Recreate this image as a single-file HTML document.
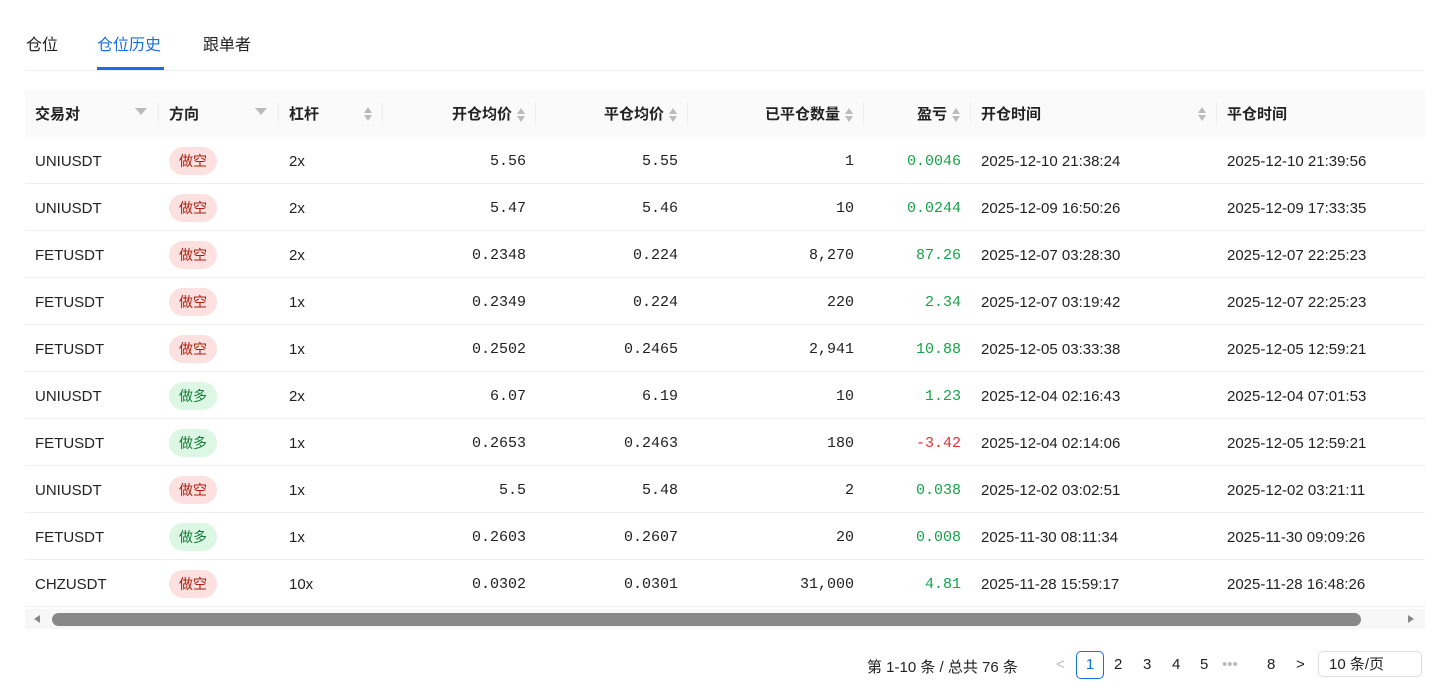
<!DOCTYPE html><html><head><meta charset="utf-8"><style>
body{margin:0;background:#fff;font-family:"Liberation Sans","Noto Sans CJK SC",sans-serif;color:#222;width:1443px;height:687px;overflow:hidden;position:relative}
.tabs{position:absolute;left:25px;top:0;width:1399px;height:70px;border-bottom:1px solid #eee}
.tab{position:absolute;top:31px;font-size:16px}
.tab.a{color:#1a6fe0}
.ink{position:absolute;left:97px;top:67px;width:67px;height:3px;background:#1a6fe0}
.wrap{position:absolute;left:25px;top:90px;width:1400px;height:520px;overflow:hidden}
table{border-collapse:collapse;table-layout:fixed;width:1420px;font-size:15px}
th{background:#fafafa;height:47px;font-weight:bold;text-align:left;padding:0 10px;position:relative;font-size:15px}
th.r,td.r{text-align:right}
th .sep{position:absolute;right:0;top:12px;height:23px;width:1px;background:#eee}
td{height:44px;border-bottom:1px solid #eee;padding:2px 10px 0;white-space:nowrap}
.m{font-family:"Liberation Mono",monospace;font-size:15px}
.g{color:#17a34a}.rd{color:#d33}
.tag{display:inline-block;width:48px;height:28px;line-height:28px;text-align:center;border-radius:14px;font-size:14px;vertical-align:middle}
.s{background:#fde0e0;color:#a21}.l{background:#dcf7e4;color:#177a3a}
.sort{display:inline-block;vertical-align:middle;margin-left:5px;width:9px;height:16px;position:relative}
.sort:before{content:"";position:absolute;top:1px;left:0;border:4.5px solid transparent;border-bottom:6px solid #bbb;border-top:0}
.sort:after{content:"";position:absolute;bottom:1px;left:0;border:4.5px solid transparent;border-top:6px solid #bbb;border-bottom:0}
.fr{position:absolute;right:10px;top:16px}
.fil{position:absolute;right:12px;top:18px;width:0;height:0;border-left:6px solid transparent;border-right:6px solid transparent;border-top:7px solid #bbb}
.sb{position:absolute;left:25px;top:609px;width:1400px;height:20px;background:#f7f7f7}
.thumb{position:absolute;left:52px;top:613px;width:1309px;height:13px;border-radius:7px;background:#888}
.pg{position:absolute;top:656px;font-size:15px}
</style></head><body>
<div class="tabs"></div>
<div class="tab" style="left:26px">仓位</div>
<div class="tab a" style="left:97px">仓位历史</div>
<div class="tab" style="left:203px">跟单者</div>
<div class="ink"></div>
<div class="wrap"><table>
<colgroup><col style="width:134px"><col style="width:120px"><col style="width:104px"><col style="width:153px"><col style="width:152px"><col style="width:176px"><col style="width:107px"><col style="width:246px"><col style="width:228px"></colgroup>
<tr><th>交易对<span class="fil"></span><span class="sep"></span></th><th>方向<span class="fil"></span><span class="sep"></span></th><th>杠杆<span class="sort fr"></span><span class="sep"></span></th><th class="r">开仓均价<span class="sort"></span><span class="sep"></span></th><th class="r">平仓均价<span class="sort"></span><span class="sep"></span></th><th class="r">已平仓数量<span class="sort"></span><span class="sep"></span></th><th class="r">盈亏<span class="sort"></span><span class="sep"></span></th><th>开仓时间<span class="sort fr"></span><span class="sep"></span></th><th>平仓时间</th></tr>
<tr><td>UNIUSDT</td><td><span class="tag s">做空</span></td><td>2x</td><td class="r m">5.56</td><td class="r m">5.55</td><td class="r m">1</td><td class="r m g">0.0046</td><td>2025-12-10 21:38:24</td><td>2025-12-10 21:39:56</td></tr>
<tr><td>UNIUSDT</td><td><span class="tag s">做空</span></td><td>2x</td><td class="r m">5.47</td><td class="r m">5.46</td><td class="r m">10</td><td class="r m g">0.0244</td><td>2025-12-09 16:50:26</td><td>2025-12-09 17:33:35</td></tr>
<tr><td>FETUSDT</td><td><span class="tag s">做空</span></td><td>2x</td><td class="r m">0.2348</td><td class="r m">0.224</td><td class="r m">8,270</td><td class="r m g">87.26</td><td>2025-12-07 03:28:30</td><td>2025-12-07 22:25:23</td></tr>
<tr><td>FETUSDT</td><td><span class="tag s">做空</span></td><td>1x</td><td class="r m">0.2349</td><td class="r m">0.224</td><td class="r m">220</td><td class="r m g">2.34</td><td>2025-12-07 03:19:42</td><td>2025-12-07 22:25:23</td></tr>
<tr><td>FETUSDT</td><td><span class="tag s">做空</span></td><td>1x</td><td class="r m">0.2502</td><td class="r m">0.2465</td><td class="r m">2,941</td><td class="r m g">10.88</td><td>2025-12-05 03:33:38</td><td>2025-12-05 12:59:21</td></tr>
<tr><td>UNIUSDT</td><td><span class="tag l">做多</span></td><td>2x</td><td class="r m">6.07</td><td class="r m">6.19</td><td class="r m">10</td><td class="r m g">1.23</td><td>2025-12-04 02:16:43</td><td>2025-12-04 07:01:53</td></tr>
<tr><td>FETUSDT</td><td><span class="tag l">做多</span></td><td>1x</td><td class="r m">0.2653</td><td class="r m">0.2463</td><td class="r m">180</td><td class="r m rd">-3.42</td><td>2025-12-04 02:14:06</td><td>2025-12-05 12:59:21</td></tr>
<tr><td>UNIUSDT</td><td><span class="tag s">做空</span></td><td>1x</td><td class="r m">5.5</td><td class="r m">5.48</td><td class="r m">2</td><td class="r m g">0.038</td><td>2025-12-02 03:02:51</td><td>2025-12-02 03:21:11</td></tr>
<tr><td>FETUSDT</td><td><span class="tag l">做多</span></td><td>1x</td><td class="r m">0.2603</td><td class="r m">0.2607</td><td class="r m">20</td><td class="r m g">0.008</td><td>2025-11-30 08:11:34</td><td>2025-11-30 09:09:26</td></tr>
<tr><td>CHZUSDT</td><td><span class="tag s">做空</span></td><td>10x</td><td class="r m">0.0302</td><td class="r m">0.0301</td><td class="r m">31,000</td><td class="r m g">4.81</td><td>2025-11-28 15:59:17</td><td>2025-11-28 16:48:26</td></tr>
</table></div>
<div class="sb"></div><div class="thumb"></div>
<div style="position:absolute;left:34px;top:615px;border:4px solid transparent;border-right:6px solid #888;border-left:0"></div>
<div style="position:absolute;left:1408px;top:615px;border:4px solid transparent;border-left:6px solid #888;border-right:0"></div>
<div class="pg" style="left:867px">第 1-10 条 / 总共 76 条</div>
<div class="pg" style="left:1056px;color:#bbb">&lt;</div>
<div style="position:absolute;left:1076px;top:651px;width:26px;height:26px;border:1px solid #1a6fe0;border-radius:5px;color:#1a6fe0;text-align:center;line-height:26px;font-size:15px">1</div>
<div class="pg" style="left:1114px">2</div><div class="pg" style="left:1143px">3</div><div class="pg" style="left:1172px">4</div><div class="pg" style="left:1200px">5</div>
<div class="pg" style="left:1222px;color:#bbb">•••</div><div class="pg" style="left:1267px">8</div><div class="pg" style="left:1296px">&gt;</div>
<div style="position:absolute;left:1318px;top:651px;width:104px;height:26px;border:1px solid #ddd;border-radius:5px;font-size:15px;line-height:26px;padding-left:10px;box-sizing:border-box">10 条/页</div>
</body></html>
